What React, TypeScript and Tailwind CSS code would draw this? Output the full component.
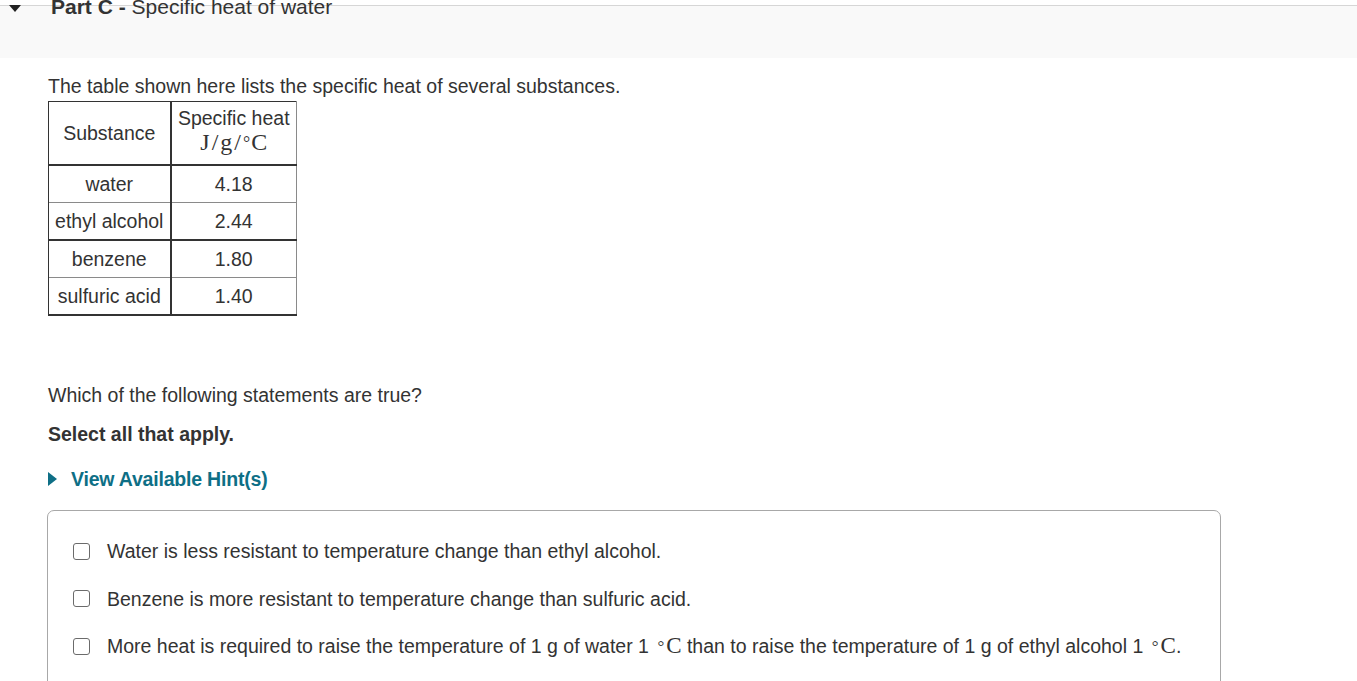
import React from "react";

const sans = { fontFamily: '"Liberation Sans", Arial, sans-serif' };

function Deg() {
  // math-style °C as in the reference (serif)
  return (
    <span className="ml-[3px] font-['Liberation_Serif',serif] text-[23px]">
      <sup className="relative -top-[1px] mr-[2px] text-[17px]">°</sup>C
    </span>
  );
}

function Checkbox() {
  return <span className="inline-block h-[17px] w-[17px] shrink-0 rounded-[3px] border border-[#6b6b6b] bg-white" />;
}

const options: React.ReactNode[] = [
  "Water is less resistant to temperature change than ethyl alcohol.",
  "Benzene is more resistant to temperature change than sulfuric acid.",
  <>
    More heat is required to raise the temperature of 1 g of water 1 <Deg /> than to raise the temperature of 1 g of
    ethyl alcohol 1 <Deg />.
  </>,
];

const rows = [
  ["water", "4.18", "border-b border-b-[#8a8a8a]"],
  ["ethyl alcohol", "2.44", "border-b-2 border-b-[#333]"],
  ["benzene", "1.80", "border-b border-b-[#8a8a8a]"],
  ["sulfuric acid", "1.40", "border-b-2 border-b-[#333]"],
];

export default function App() {
  return (
    <div className="min-h-screen w-[1357px] overflow-hidden bg-white text-[#333]" style={sans}>
      {/* Part header band */}
      <div className="mt-[5px] h-[53px] border-t border-t-[#d6d6d6] bg-[#f9f9f9]">
        <div className="-mt-[11px] flex h-[24px] items-center">
          <svg width="12" height="7" viewBox="0 0 12 7" className="ml-[9px] mt-[3px]">
            <path d="M0 0 H12 L6 7 Z" fill="#222" />
          </svg>
          <div className="ml-[30px] text-[21px] leading-[24px] text-[#333]">
            <span className="font-bold">Part C - </span>Specific heat of water
          </div>
        </div>
      </div>

      <div className="px-[48px]">
        <p className="mt-[16px] text-[19.5px] leading-[24px]">
          The table shown here lists the specific heat of several substances.
        </p>

        <table className="mt-[3px] border-collapse text-[19.5px] leading-[22px]">
          <thead>
            <tr className="h-[63px] border-b-2 border-b-[#333]">
              <th className="w-[122px] border-l border-t border-[#333] border-r-2 border-r-[#333] p-0 text-center font-normal">
                Substance
              </th>
              <th className="w-[126px] border-t border-r border-t-[#333] border-r-[#8a8a8a] p-0 pb-[3px] text-center font-normal">
                <div>Specific heat</div>
                <div className="font-['Liberation_Serif',serif] text-[24px] leading-[26px]">
                  J<span className="mx-[2px]">/</span>g<span className="mx-[2px]">/</span>
                  <sup className="relative -top-[1px] mr-[1px] text-[18px]">°</sup>C
                </div>
              </th>
            </tr>
          </thead>
          <tbody>
            {rows.map(([s, v, b]) => (
              <tr key={s} className={`h-[37.5px] ${b}`}>
                <td className="border-l border-l-[#333] border-r-2 border-r-[#333] px-[4px] text-center">{s}</td>
                <td className="border-r border-r-[#8a8a8a] text-center">{v}</td>
              </tr>
            ))}
          </tbody>
        </table>

        <p className="mt-[67px] text-[19.5px] leading-[24px]">Which of the following statements are true?</p>
        <p className="mt-[15px] text-[19.5px] font-bold leading-[24px]">Select all that apply.</p>

        <div className="mt-[21px] flex items-center gap-[14px]">
          <svg width="9" height="14" viewBox="0 0 9 14">
            <path d="M0 0 L9 7 L0 14 Z" fill="#0e6f86" />
          </svg>
          <span className="text-[19.5px] font-bold leading-[24px] tracking-[-0.2px] text-[#0e6f86]">
            View Available Hint(s)
          </span>
        </div>

        <div className="mt-[19px] h-[220px] w-[1174px] -ml-[1px] rounded-[7px] border border-[#a8a8a8] pt-[28px]">
          {options.map((o, i) => (
            <div key={i} className="flex h-[47.5px] items-center gap-[17px] pl-[25px] pb-[22px]">
              <Checkbox />
              <span className="text-[19.5px] leading-[24px]">{o}</span>
            </div>
          ))}
        </div>
      </div>
    </div>
  );
}
